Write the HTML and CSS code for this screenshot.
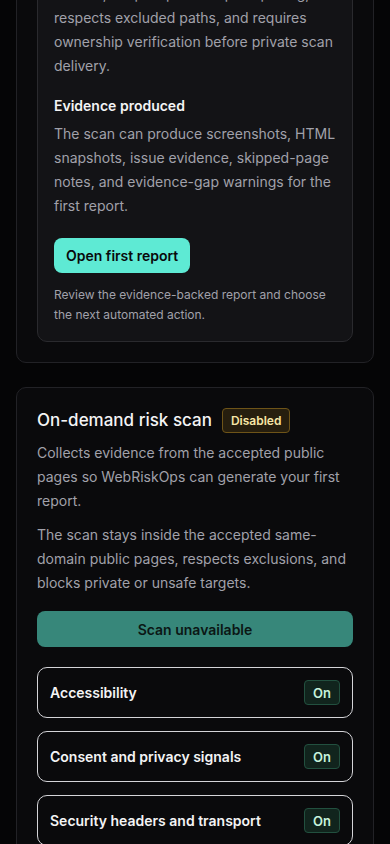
FILE: index.html
```html
<!DOCTYPE html>
<html lang="en">
<head>
    <meta charset="UTF-8">
    <meta name="viewport" content="width=device-width, initial-scale=1.0">
    <title>WebRiskOps - First scan</title>
    <link rel="stylesheet" href="styles.css">
</head>
<body>
    <div class="page">
        <section class="panel">
            <h2 class="panel-title">Your first report</h2>
            <p class="muted">Everything WebRiskOps needs before the first automated scan runs.</p>

            <div class="inner">
                <h3 class="inner-title">Scan boundaries</h3>
                <p class="muted">The crawler stays on the accepted domain, keeps a polite request pacing, respects excluded paths, and requires ownership verification before private scan delivery.</p>

                <h3 class="inner-title" id="evidence">Evidence produced</h3>
                <p class="muted">The scan can produce screenshots, HTML snapshots, issue evidence, skipped-page notes, and evidence-gap warnings for the first report.</p>

                <button class="btn btn-primary">Open first report</button>
                <p class="note">Review the evidence-backed report and choose the next automated action.</p>
            </div>
        </section>

        <section class="panel">
            <div class="title-row">
                <h2 class="panel-title">On-demand risk scan</h2>
                <span class="badge badge-warn">Disabled</span>
            </div>
            <p class="muted">Collects evidence from the accepted public pages so WebRiskOps can generate your first report.</p>
            <p class="muted">The scan stays inside the accepted same-domain public pages, respects exclusions, and blocks private or unsafe targets.</p>

            <button class="btn btn-block" disabled>Scan unavailable</button>

            <div class="checks">
                <div class="check-row">
                    <span>Accessibility</span>
                    <span class="badge badge-on">On</span>
                </div>
                <div class="check-row">
                    <span>Consent and privacy signals</span>
                    <span class="badge badge-on">On</span>
                </div>
                <div class="check-row">
                    <span>Security headers and transport</span>
                    <span class="badge badge-on">On</span>
                </div>
                <div class="check-row">
                    <span>Performance and page health</span>
                    <span class="badge badge-on">On</span>
                </div>
                <div class="check-row">
                    <span>Broken links and errors</span>
                    <span class="badge badge-on">On</span>
                </div>
            </div>
        </section>
    </div>

    <script>
        // keep the evidence section in view, the way the screen was captured
        window.addEventListener('load', function () {
            const heading = document.getElementById('evidence');
            const top = heading.getBoundingClientRect().top + window.scrollY;
            window.scrollTo(0, top - 94);
        });
    </script>
</body>
</html>
```

FILE: styles.css
```css
* {
    box-sizing: border-box;
}
html {
    scrollbar-width: none;
}
body {
    margin: 0;
    background: #050506;
    color: #f4f4f5;
    font-family: Inter, "Noto Sans", sans-serif;
}
.page {
    padding: 16px;
    display: flex;
    flex-direction: column;
    gap: 24px;
    padding-bottom: 200px;
}
.panel {
    background: #0a0a0c;
    border: 1px solid #222226;
    border-radius: 10px;
    padding: 20px;
}
.panel-title {
    margin: 0;
    font-size: 17px;
    font-weight: 500;
    line-height: 25px;
    color: #f4f4f5;
}
.title-row {
    display: flex;
    align-items: center;
    gap: 10px;
    margin-bottom: 8px;
}
.muted {
    margin: 0 0 10px;
    font-size: 14px;
    line-height: 24px;
    color: #a1a1aa;
}
.inner {
    margin-top: 16px;
    background: #131316;
    border: 1px solid #2a2a2e;
    border-radius: 10px;
    padding: 16px;
}
.inner .muted {
    margin-bottom: 0;
}
.inner-title {
    margin: 16px 0 4px;
    font-size: 14px;
    font-weight: 600;
    line-height: 24px;
    color: #f4f4f5;
}
.inner-title:first-child {
    margin-top: 0;
}
.btn {
    font-family: inherit;
    font-size: 14px;
    font-weight: 600;
    border: none;
    border-radius: 8px;
    cursor: pointer;
}
.btn-primary {
    margin-top: 20px;
    height: 35px;
    padding: 0 12px;
    background: #5eead4;
    color: #09090b;
}
.btn-block {
    display: block;
    width: 100%;
    height: 36px;
    margin-top: 16px;
    background: #37877a;
    color: #0b1715;
    cursor: default;
}
.note {
    margin: 12px 0 0;
    font-size: 12px;
    line-height: 20px;
    color: #a1a1aa;
}
.badge {
    display: inline-flex;
    align-items: center;
    height: 25px;
    padding: 0 8px;
    border-radius: 4px;
    font-size: 12px;
    font-weight: 600;
}
.badge-warn {
    background: #261e0e;
    border: 1px solid #6e5418;
    color: #f7e6a6;
}
.badge-on {
    background: #11241d;
    border: 1px solid #22503f;
    color: #c6f2dc;
    font-size: 13px;
}
.checks {
    margin-top: 20px;
    display: flex;
    flex-direction: column;
    gap: 13px;
}
.check-row {
    display: flex;
    align-items: center;
    justify-content: space-between;
    padding: 12px 12px 12px 12px;
    border: 1px solid #d4d4d8;
    border-radius: 10px;
    font-size: 14px;
    font-weight: 600;
    color: #f4f4f5;
}
```
